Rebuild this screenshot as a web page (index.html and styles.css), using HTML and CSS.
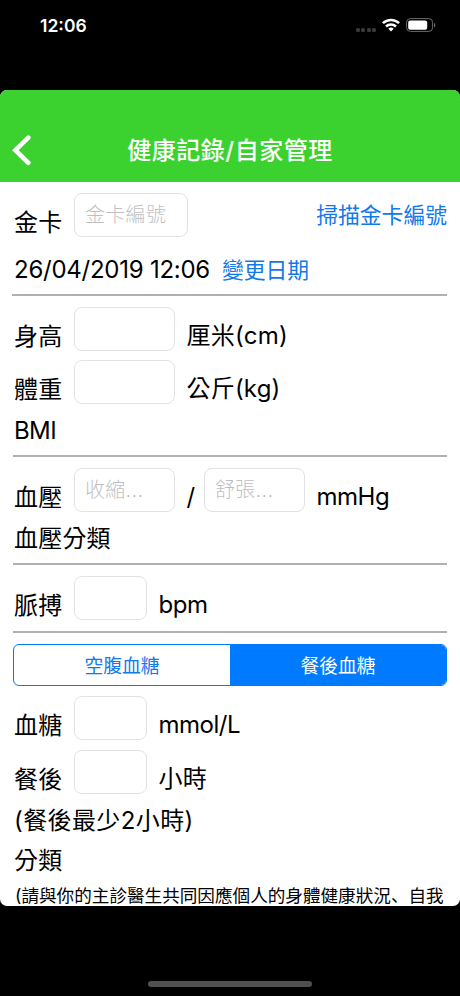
FILE: index.html
```html
<!DOCTYPE html>
<html lang="zh-Hant">
<head>
  <meta charset="UTF-8">
  <meta name="viewport" content="width=device-width, initial-scale=1.0">
  <title>健康記錄/自家管理</title>
  <link rel="stylesheet" href="styles.css">
</head>
<body>
  <!-- Status bar -->
  <div class="status-bar">
    <span class="clock">12:06</span>
    <div class="status-icons">
      <div class="signal"><i></i><i></i><i></i><i></i></div>
      <svg class="wifi" width="18" height="14" viewBox="0 0 18 14">
        <g fill="none" stroke="#fff" stroke-width="2.5">
          <path d="M0.9 5.2a11.6 11.6 0 0 1 16.2 0"/>
          <path d="M4 8.5a7.2 7.2 0 0 1 10 0"/>
        </g>
        <path d="M9 13.5L6.3 10.8a3.9 3.9 0 0 1 5.4 0z" fill="#fff"/>
      </svg>
      <svg class="battery" width="30" height="14" viewBox="0 0 30 14">
        <rect x="0.6" y="0.6" width="26" height="12.8" rx="3.8" fill="none" stroke="#6b6b6b" stroke-width="1"/>
        <rect x="2.2" y="2.4" width="19" height="9.4" rx="2" fill="#fff"/>
        <path d="M28 4.9v4.4c1.7-.6 1.7-3.8 0-4.4z" fill="#6b6b6b"/>
      </svg>
    </div>
  </div>

  <div class="app">
    <header class="navbar">
      <button class="back" type="button" aria-label="返回">
        <svg width="20" height="32" viewBox="0 0 20 32">
          <path d="M17.3 3.7L4.4 16.2L17.3 28.8" fill="none" stroke="#fff" stroke-width="4.6" stroke-linecap="round" stroke-linejoin="miter"/>
        </svg>
      </button>
      <h1>健康記錄/自家管理</h1>
    </header>

    <form class="record">
      <div class="row">
        <label for="card">金卡</label>
        <input class="field card" type="text" id="card" placeholder="金卡編號">
        <a class="link scan">掃描金卡編號</a>
      </div>
      <div class="line date">
        <span class="datetime">26/04/2019 12:06</span>
        <a class="link">變更日期</a>
      </div>
      <hr>

      <div class="row">
        <label for="height">身高</label>
        <input class="field medium" type="text" id="height">
        <span class="unit">厘米(cm)</span>
      </div>
      <div class="row weight">
        <label for="weight">體重</label>
        <input class="field medium" type="text" id="weight">
        <span class="unit">公斤(kg)</span>
      </div>
      <div class="line bmi">BMI</div>
      <hr>

      <div class="row">
        <label for="systolic">血壓</label>
        <input class="field medium" type="text" id="systolic" placeholder="收縮...">
        <span class="unit slash">/</span>
        <input class="field medium" type="text" id="diastolic" placeholder="舒張...">
        <span class="unit latin">mmHg</span>
      </div>
      <div class="line bp-type">血壓分類</div>
      <hr>

      <div class="row">
        <label for="pulse">脈搏</label>
        <input class="field small" type="text" id="pulse">
        <span class="unit latin">bpm</span>
      </div>
      <hr>

      <div class="segmented">
        <button type="button">空腹血糖</button>
        <button type="button" class="active">餐後血糖</button>
      </div>

      <div class="row sugar">
        <label for="sugar">血糖</label>
        <input class="field small" type="text" id="sugar">
        <span class="unit latin">mmol/L</span>
      </div>
      <div class="row meal">
        <label for="hours">餐後</label>
        <input class="field small" type="text" id="hours">
        <span class="unit">小時</span>
      </div>
      <div class="line hint">(餐後最少2小時)</div>
      <div class="line type">分類</div>
      <p class="note">(請與你的主診醫生共同因應個人的身體健康狀況<span class="comma" lang="ja">、</span>自我</p>
    </form>
  </div>

  <div class="home-indicator"></div>
</body>
</html>
```

FILE: styles.css
```css
* { box-sizing: border-box; }
body {
  margin: 0;
  width: 460px;
  height: 996px;
  overflow: hidden;
  display: flex;
  flex-direction: column;
  background: #000;
  color: #000;
  font-family: Inter, "Noto Sans CJK TC", sans-serif;
}
button { padding: 0; border: none; background: none; font-family: inherit; }

/* Status bar */
.status-bar {
  flex: none;
  height: 90px;
  padding: 15px 24px 0 40px;
  display: flex;
  justify-content: space-between;
  align-items: flex-start;
}
.clock { color: #fff; font-size: 17.5px; font-weight: 600; line-height: 22px; }
.status-icons { display: flex; align-items: flex-start; padding-top: 3px; }
.signal { display: flex; gap: 1.5px; padding-top: 10px; margin-right: 6px; }
.signal i { width: 4px; height: 4px; border-radius: 1.5px; background: #3a3a3a; }
.wifi { margin-right: 6px; }

/* App window */
.app {
  flex: none;
  height: 816px;
  overflow: hidden;
  border-radius: 7px;
  background: #fff;
}
.navbar {
  height: 92px;
  padding-top: 31px;
  background: #3bd230;
  display: flex;
  justify-content: center;
  position: relative;
}
.navbar h1 {
  margin: 0;
  color: #fff;
  font-size: 24px;
  font-weight: 500;
  line-height: 60px;
  letter-spacing: 0.5px;
}
.back { position: absolute; left: 11px; top: 44px; height: 32px; }
.back svg { display: block; }

/* Form */
.record { padding: 11px 13px 0; font-size: 24px; letter-spacing: 0.2px; }
.row { display: flex; align-items: flex-start; height: 44px; white-space: nowrap; }
.row label { width: 61px; padding-left: 1px; margin-top: 15px; line-height: 30px; }
.unit { margin: 14px 0 0 12px; line-height: 30px; }
.latin { letter-spacing: -0.5px; }
.slash { width: 17.5px; }
.field {
  height: 44px;
  padding: 0 10px;
  border: 1px solid #e2e2e2;
  border-radius: 8px;
  background: #fff;
  font: 20px Inter, "Noto Sans CJK TC", sans-serif;
  letter-spacing: 0.3px;
  outline: none;
}
.field::placeholder { color: #bfbfc3; font-weight: 300; }
.card { width: 114px; }
.medium { width: 100.5px; }
.small { width: 72.5px; }
.link { color: #1279ea; font-size: 21.8px; letter-spacing: 0; }
.scan { margin-left: auto; line-height: 45px; }
.line { height: 30px; line-height: 30px; padding-left: 1px; white-space: nowrap; }
.date { display: flex; margin-top: 18px; }
.datetime { letter-spacing: -0.25px; }
.date .link { margin-left: 12px; }
hr { height: 2px; margin: 9px 0 11px -1px; border: none; background: #b0b0b0; }
.weight { margin-top: 9px; }
.bmi { margin-top: 12px; letter-spacing: -0.6px; }
.bmi + hr { margin: 9px 0 11px; }
.bp-type { margin-top: 12px; }
.bp-type + hr { margin-left: 0; }
.row + hr { margin: 11px 0 11px; }

.segmented {
  display: flex;
  height: 42px;
  border: 1.5px solid #007aff;
  border-radius: 6px;
  overflow: hidden;
}
.segmented button { flex: 1; padding-bottom: 2px; color: #1279ea; font-size: 18.8px; }
.segmented .active { background: #007aff; color: #fff; }

.sugar { margin-top: 10px; }
.meal { margin-top: 10px; }
.hint { margin-top: 12px; letter-spacing: 0.4px; }
.type { margin-top: 10px; }
.note { margin: 8px 0 0 2px; font-size: 17.6px; line-height: 23px; letter-spacing: 0; white-space: nowrap; }
.comma { font-family: "Noto Sans CJK JP", sans-serif; line-height: 1; }

.home-indicator {
  width: 164px;
  height: 6px;
  margin: 75px auto 0;
  border-radius: 3px;
  background: #505050;
}
```
